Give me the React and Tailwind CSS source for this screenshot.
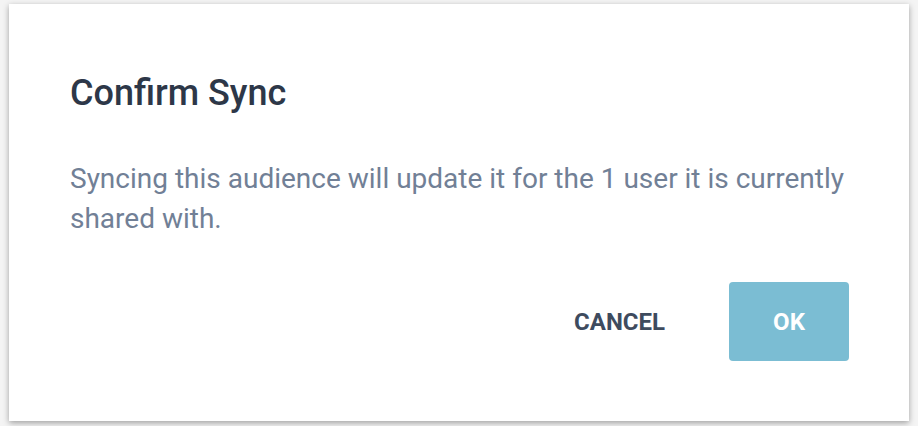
import React from 'react';

const App = () => {
  return (
    <div className="w-[918px] h-[426px] bg-[#f4f4f4] pt-[4px] pl-[9px] font-['Roboto',sans-serif]">
      <div className="w-[900px] h-[417px] bg-white shadow-[0_2px_6px_rgba(0,0,0,0.35)] pt-[69px] pl-[61px] pr-[50px] flex flex-col">
        <h2 className="text-[36px] leading-[40px] font-medium text-[#2d3748]">Confirm Sync</h2>
        <p className="mt-[46px] text-[28px] leading-[40px] text-[#718096]">
          Syncing this audience will update it for the 1 user it is currently shared with.
        </p>
        <div className="mt-auto mb-[60px] mr-[10px] flex justify-end items-center gap-[64px]">
          <button className="text-[24px] font-bold text-[#3e4b5e]">CANCEL</button>
          <button className="w-[120px] h-[79px] rounded-[4px] bg-[#7bbdd3] text-white text-[24px] font-bold">
            OK
          </button>
        </div>
      </div>
    </div>
  );
};

export default App;
